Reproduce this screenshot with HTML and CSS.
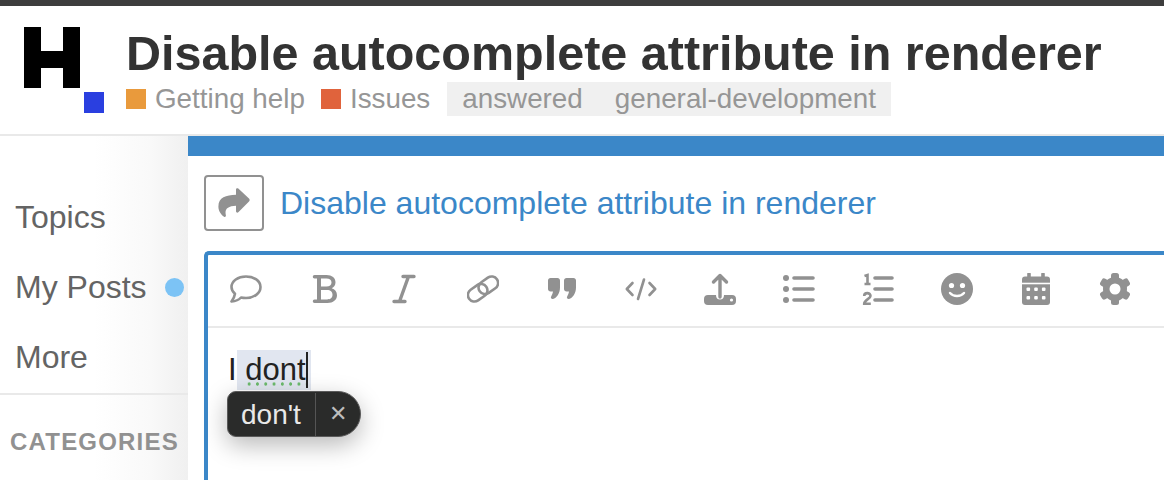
FILE: index.html
```html
<!DOCTYPE html>
<html lang="en">
<head>
    <meta charset="UTF-8">
    <title>Disable autocomplete attribute in renderer</title>
    <link rel="stylesheet" href="styles.css">
</head>
<body>
    <header class="site-header">
        <svg class="logo" width="84" height="88" viewBox="0 0 84 88">
            <path d="M0 0h17v24h22V0h17v61H39V41H17v20H0z" fill="#000"/>
            <rect x="60" y="65" width="20" height="21" fill="#2a3fe0"/>
        </svg>
        <div class="topic-info">
            <h1>Disable autocomplete attribute in renderer</h1>
            <div class="topic-meta">
                <span class="category"><i class="swatch orange"></i>Getting help</span>
                <span class="category"><i class="swatch red"></i>Issues</span>
                <span class="tags"><span>answered</span><span>general-development</span></span>
            </div>
        </div>
    </header>

    <div class="page">
        <nav class="sidebar">
            <a class="nav-item">Topics</a>
            <a class="nav-item">My Posts<i class="unread-dot"></i></a>
            <a class="nav-item">More</a>
            <div class="nav-heading">CATEGORIES</div>
        </nav>

        <main class="composer">
            <div class="reply-to">
                <span class="reply-button">
                    <svg width="32" height="30" viewBox="0 0 32 30"><path d="M31 10.500 20.300.6c-.9-.8-2.300-.2-2.300 1v5.200C8 7 .4 9.500.4 18.500c0 4.500 2.600 8.300 5.700 10.300.9.600 2.100-.2 1.800-1.300-1.500-6.500 1.500-9.200 10.100-9.700v5.500c0 1.200 1.400 1.800 2.300 1L31 13.500c.9-.8.900-2.200 0-3z" fill="#919191"/></svg>
                </span>
                <a class="reply-title">Disable autocomplete attribute in renderer</a>
            </div>

            <div class="editor">
                <div class="toolbar">
                    <button><svg viewBox="0 0 32 32"><path d="M16 3.500C8 3.500 1.500 8 1.500 14c0 2.800 1.400 5 3.500 6.800-.4 2.700-1.600 5.200-3.500 7.700 3.500-.3 7.500-1.800 9.500-4 1.600.4 3.200.5 5 .5 8 0 14.500-4.700 14.500-11S24 3.500 16 3.500z" fill="none" stroke="#919191" stroke-width="2.600" stroke-linejoin="round"/></svg></button>
                    <button><svg viewBox="0 0 32 32"><path fill-rule="evenodd" d="M5.500 2h12c5.500 0 9 3 9 7.300 0 2.800-1.500 5-3.800 6 3.200 1 5.300 3.500 5.300 7 0 4.700-3.800 7.700-9.500 7.700H5.500a1.750 1.750 0 0 1 0-3.500H8V5.500H5.500a1.750 1.750 0 0 1 0-3.500zM12 5.500v8h5.500c3 0 5-1.600 5-4s-2-4-5-4zM12 17v9.500h6c3.500 0 5.500-1.800 5.500-4.700S21.500 17 18 17z" fill="#919191"/></svg></button>
                    <button><svg viewBox="0 0 32 32"><path d="M15 3.500h11M6 28.500h11M20.500 3.500l-9 25" fill="none" stroke="#919191" stroke-width="3.400" stroke-linecap="round"/></svg></button>
                    <button><svg viewBox="0 0 32 32"><g transform="rotate(-35 16 16)" fill="none" stroke="#919191" stroke-width="2.600"><rect x="-1" y="9.500" width="21" height="13" rx="6.500"/><rect x="12" y="9.500" width="21" height="13" rx="6.500"/></g></svg></button>
                    <button><svg viewBox="0 0 32 32"><g fill="#919191"><path d="M4.500 5h7c1.400 0 2.500 1.100 2.500 2.500v7c0 6-3.500 10.500-7 11.500-1.500.3-2.500-1-2-2 .6-1.500 1.800-3.500 2-5.500H4.500C3.100 18.500 2 17.400 2 16V7.500C2 6.100 3.100 5 4.500 5z"/><path d="M20.500 5h7c1.400 0 2.500 1.100 2.500 2.500v7c0 6-3.500 10.500-7 11.500-1.500.3-2.500-1-2-2 .6-1.500 1.800-3.500 2-5.500h-2.500c-1.400 0-2.500-1.100-2.500-2.500V7.500c0-1.400 1.100-2.500 2.500-2.500z"/></g></svg></button>
                    <button><svg viewBox="0 0 32 32"><path d="M7.500 10 1.800 16l5.700 6M24.500 10l5.700 6-5.700 6M19 6.500 13 26" fill="none" stroke="#919191" stroke-width="2.600" stroke-linecap="round" stroke-linejoin="round"/></svg></button>
                    <button><svg viewBox="0 0 32 32"><path d="M4 22h8c0 3 1.500 4.500 4 4.500s4-1.500 4-4.500h8a4 4 0 0 1 4 4v2a4 4 0 0 1-4 4H4a4 4 0 0 1-4-4v-2a4 4 0 0 1 4-4z" fill="#919191"/><path d="M16 2.500V24M9.500 9 16 2.500 22.500 9" fill="none" stroke="#919191" stroke-width="3.400" stroke-linecap="round" stroke-linejoin="round"/><circle cx="27.500" cy="27" r="1.600" fill="#fff"/></svg></button>
                    <button><svg viewBox="0 0 32 32"><g fill="#919191"><circle cx="3" cy="5" r="3"/><circle cx="3" cy="16" r="3"/><circle cx="3" cy="27" r="3"/></g><path d="M11 5h19M11 16h19M11 27h19" stroke="#919191" stroke-width="3.600" stroke-linecap="round"/></svg></button>
                    <button><svg viewBox="0 0 32 32"><path d="M13 5h17M13 16h17M13 27h17" stroke="#919191" stroke-width="3.600" stroke-linecap="round"/><path d="M2.500 3 5.500 2v9M2.500 11h6M2.200 23c0-3.800 6.300-3.800 6.300 0 0 2.600-6.300 4-6.300 7.800h6.600" fill="none" stroke="#919191" stroke-width="2.600"/></svg></button>
                    <button><svg viewBox="0 0 32 32"><circle cx="16" cy="16" r="16" fill="#919191"/><circle cx="10.500" cy="12.500" r="2.600" fill="#fff"/><circle cx="21.500" cy="12.500" r="2.600" fill="#fff"/><path d="M9 20c3.500 4 10.500 4 14 0" fill="none" stroke="#fff" stroke-width="2.400" stroke-linecap="round"/></svg></button>
                    <button><svg viewBox="0 0 32 32"><rect x="2" y="3.500" width="28" height="28.500" rx="3" fill="#919191"/><path d="M9 1v5M23 1v5" stroke="#919191" stroke-width="3.600" stroke-linecap="round"/><path d="M2 10.500h28" stroke="#fff" stroke-width="1.600"/><g fill="#fff"><rect x="6.500" y="14.500" width="3.600" height="3.600" rx="1"/><rect x="14.200" y="14.500" width="3.600" height="3.600" rx="1"/><rect x="21.900" y="14.500" width="3.600" height="3.600" rx="1"/><rect x="6.500" y="23" width="3.600" height="3.600" rx="1"/><rect x="14.200" y="23" width="3.600" height="3.600" rx="1"/><rect x="21.900" y="23" width="3.600" height="3.600" rx="1"/></g></svg></button>
                    <button><svg viewBox="0 0 32 32"><g fill="#919191"><circle cx="16" cy="16" r="12"/><rect x="12" y="0" width="8" height="32" rx="2.500"/><rect x="12" y="0" width="8" height="32" rx="2.500" transform="rotate(60 16 16)"/><rect x="12" y="0" width="8" height="32" rx="2.500" transform="rotate(120 16 16)"/></g><circle cx="16" cy="16" r="5.500" fill="#fff"/></svg></button>
                </div>
                <div class="editor-body">
                    <div class="editor-line">I<span class="selected"> <span class="misspelled">dont</span><i class="caret"></i></span></div>
                    <div class="suggestion">
                        <span class="suggestion-word">don't</span>
                        <span class="suggestion-close">✕</span>
                    </div>
                </div>
            </div>
        </main>
    </div>
</body>
</html>
```

FILE: styles.css
```css
html, body {
    height: 100%;
}

body {
    margin: 0;
    overflow: hidden;
    background: #fff;
    color: #222;
    font-family: 'Liberation Sans', Arial, sans-serif;
    border-top: 6px solid #3d3d3d;
    box-sizing: border-box;
}

.site-header {
    display: flex;
    height: 130px;
    box-sizing: border-box;
    padding: 21px 0 0 24px;
    border-bottom: 2px solid #e9e9e9;
}

.logo {
    flex: none;
    margin-right: 18px;
}

.topic-info {
    min-width: 0;
}

h1 {
    margin: 0;
    color: #333;
    font-size: 48.500px;
    line-height: 52px;
    font-weight: bold;
    white-space: nowrap;
}

.topic-meta {
    display: flex;
    align-items: center;
    height: 34px;
    margin-top: 3px;
    color: #969696;
    font-size: 27.800px;
}

.category {
    display: flex;
    align-items: center;
    margin-right: 16px;
}

.category + .category {
    margin-right: 17px;
}

.swatch {
    width: 20px;
    height: 20px;
    margin-right: 9px;
}

.swatch.orange { background: #e99a3c; }
.swatch.red { background: #e0633c; }

.tags {
    display: flex;
    gap: 32px;
    height: 34px;
    line-height: 34px;
    padding: 0 15px;
    background: #f0f0f0;
}

.page {
    display: flex;
    height: 344px;
}

.sidebar {
    flex: none;
    width: 188px;
    padding-top: 46px;
    box-sizing: border-box;
    background: linear-gradient(to right, #fff 50%, #f9f9f9 80%, #f0f0f0 100%);
    color: #646464;
    font-size: 32px;
}

.nav-item {
    display: flex;
    align-items: center;
    height: 70px;
    padding-left: 15px;
}

.unread-dot {
    width: 19px;
    height: 19px;
    margin-left: 18px;
    border-radius: 50%;
    background: #7cc3f5;
}

.nav-heading {
    margin-top: 1px;
    padding: 33px 0 0 10px;
    border-top: 2px solid #e9e9e9;
    color: #919191;
    font-size: 24px;
    font-weight: bold;
    line-height: 28px;
    letter-spacing: 1.200px;
}

.composer {
    flex: 1;
    min-width: 0;
    border-top: 20px solid #3b87c8;
    padding-left: 16px;
}

.reply-to {
    display: flex;
    align-items: center;
    gap: 16px;
    margin-top: 19px;
    height: 56px;
}

.reply-button {
    display: flex;
    align-items: center;
    justify-content: center;
    width: 60px;
    height: 56px;
    box-sizing: border-box;
    border: 2px solid #919191;
    border-radius: 4px;
}

.reply-title {
    color: #3b87c8;
    font-size: 32px;
    white-space: nowrap;
}

.editor {
    margin-top: 20px;
    height: 240px;
    border-top: 4px solid #3b87c8;
    border-left: 4px solid #3b87c8;
    border-top-left-radius: 5px;
}

.toolbar {
    display: flex;
    height: 71px;
    align-items: flex-start;
    border-bottom: 2px solid #e9e9e9;
}

.toolbar button {
    flex: none;
    display: flex;
    align-items: center;
    justify-content: center;
    width: 79px;
    height: 68px;
    padding: 0;
    border: 0;
    background: none;
}

.toolbar button:first-child {
    margin-left: -2px;
}

.toolbar svg {
    width: 32px;
    height: 32px;
}

.editor-body {
    position: relative;
    padding: 22px 0 0 20px;
}

.editor-line {
    height: 40px;
    line-height: 40px;
    font-size: 31px;
    color: #222;
    white-space: pre;
}

.selected {
    position: relative;
    display: inline-block;
    padding-right: 5px;
    background: #e1e6f0;
}

.misspelled {
    background: radial-gradient(circle, #6cba6c 1.400px, transparent 1.900px) 0 calc(100% - 1px) / 8.300px 4px repeat-x;
}

.caret {
    position: absolute;
    right: 3px;
    top: 2px;
    width: 2px;
    height: 36px;
    background: #222;
}

.suggestion {
    position: absolute;
    left: 19px;
    top: 63px;
    display: flex;
    align-items: center;
    height: 46px;
    box-sizing: border-box;
    border: 1.500px solid #5a5a5a;
    border-radius: 9px 23px 23px 9px;
    background: #2a2b2a;
    color: #e8e8e8;
    font-size: 28px;
    box-shadow: 0 8px 24px rgba(0, 0, 0, 0.28);
}

.suggestion-word {
    padding: 0 14px 0 13px;
    line-height: 43px;
    border-right: 1.500px solid #555;
}

.suggestion-close {
    width: 44px;
    text-align: center;
    color: #bdbdbd;
    font-size: 22px;
}
```
